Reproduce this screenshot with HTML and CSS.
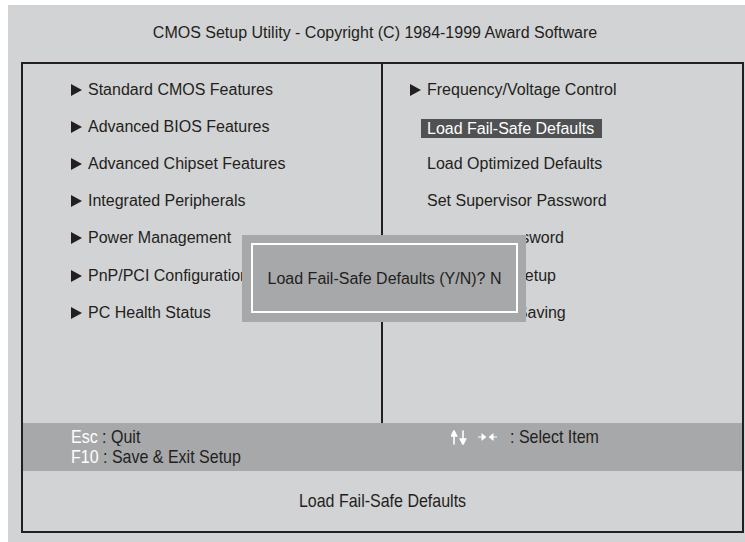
FILE: index.html
```html
<!DOCTYPE html>
<html lang="en">
  <head>
    <meta charset="UTF-8" />
    <title>CMOS Setup Utility</title>
    <link rel="stylesheet" href="styles.css">
  </head>
  <body>
    <div class="screen">
      <div class="title">CMOS Setup Utility - Copyright (C) 1984-1999 Award Software</div>

      <div class="setup">
        <div class="menus">
          <ul class="menu menu-left">
            <li><span class="arrow"></span>Standard CMOS Features</li>
            <li><span class="arrow"></span>Advanced BIOS Features</li>
            <li><span class="arrow"></span>Advanced Chipset Features</li>
            <li><span class="arrow"></span>Integrated Peripherals</li>
            <li><span class="arrow"></span>Power Management</li>
            <li><span class="arrow"></span>PnP/PCI Configurations</li>
            <li><span class="arrow"></span>PC Health Status</li>
          </ul>
          <ul class="menu menu-right">
            <li><span class="arrow"></span>Frequency/Voltage Control</li>
            <li class="plain"><span class="selected">Load Fail-Safe Defaults</span></li>
            <li class="plain">Load Optimized Defaults</li>
            <li class="plain">Set Supervisor Password</li>
            <li class="plain">Set User Password</li>
            <li class="plain">Save &amp; Exit Setup</li>
            <li class="plain">Exit Without Saving</li>
          </ul>

          <!-- confirm box drawn over the menu -->
          <div class="dialog">
            <div class="dialog-inner">Load Fail-Safe Defaults (Y/N)? N</div>
          </div>
        </div>

        <div class="keys">
          <div class="keys-col keys-left">
            <div class="key-line"><span class="key">Esc</span> : Quit</div>
            <div class="key-line"><span class="key">F10</span> : Save &amp; Exit Setup</div>
          </div>
          <div class="keys-col">
            <div class="key-line">
              <svg class="icon-updown" width="18" height="13" viewBox="0 0 18 13">
                <path d="M3 13V2M0.5 5L3 0.5 5.5 5Z" stroke="#fff" stroke-width="1.6" fill="#fff" />
                <path d="M12 0V11M9.5 8L12 12.5 14.5 8Z" stroke="#fff" stroke-width="1.6" fill="#fff" />
              </svg>
              <svg class="icon-leftright" width="20" height="8" viewBox="0 0 20 8">
                <path d="M0 4H6M4 1.5L7.5 4 4 6.5Z" stroke="#fff" stroke-width="1" fill="#fff" />
                <path d="M19 4H13M15 1.5L11.5 4 15 6.5Z" stroke="#fff" stroke-width="1" fill="#fff" />
              </svg>
              <span class="key-text">: Select Item</span>
            </div>
          </div>
        </div>

        <div class="status">Load Fail-Safe Defaults</div>
      </div>
    </div>
  </body>
</html>
```

FILE: styles.css
```css
body {
  margin: 0;
  background: #ffffff;
  font-family: "Liberation Sans", Arial, sans-serif;
  font-size: 16px;
  color: #231f20;
}

.screen {
  margin: 5px 0 0 8px;
  width: 737px;
  height: 537px;
  padding-top: 18px;
  box-sizing: border-box;
  background: #d2d3d5;
}

.title {
  text-align: center;
  line-height: 20px;
  padding-right: 3px;
}

.setup {
  margin: 19px 0 0 13px;
  width: 719px;
  border: 2px solid #231f20;
}

.menus {
  position: relative;
  display: flex;
  height: 359px;
}

.menu {
  list-style: none;
  margin: 0;
  padding: 7px 0 0 0;
  box-sizing: border-box;
}

.menu li {
  display: flex;
  align-items: center;
  height: 37.2px;
  white-space: nowrap;
}

.menu-left {
  width: 360px;
  padding-left: 48px;
  border-right: 2px solid #231f20;
}

.menu-right {
  width: 359px;
  padding-left: 27px;
}

.menu-right .plain {
  padding-left: 17px;
}

.arrow {
  width: 0;
  height: 0;
  border-left: 11px solid #231f20;
  border-top: 6px solid transparent;
  border-bottom: 6px solid transparent;
  margin-right: 6px;
}

.selected {
  background: #505153;
  color: #ffffff;
  line-height: 19px;
  padding: 0 8px 0 6px;
  margin: 3px 0 0 -6px;
}

.dialog {
  position: absolute;
  left: 219px;
  top: 171px;
  width: 284px;
  height: 87px;
  padding: 8px 8px 9px 9px;
  box-sizing: border-box;
  background: #a7a8aa;
}

/* the box blanks whole text rows on the right side */
.dialog::before {
  content: "";
  position: absolute;
  left: 165px;
  right: 0;
  top: -6px;
  height: 6px;
  background: #d2d3d5;
}

.dialog-inner {
  height: 100%;
  border: 2px solid #ffffff;
  box-sizing: border-box;
  display: flex;
  align-items: center;
  justify-content: center;
  padding-top: 2px;
}

.keys {
  display: flex;
  height: 48px;
  padding: 4px 0 0 48px;
  box-sizing: border-box;
  background: #a7a8aa;
}

.keys-left {
  width: 380px;
}

.key-line {
  display: flex;
  align-items: center;
  height: 20px;
  transform: scaleY(1.12);
  white-space: pre;
}

.key {
  color: #ffffff;
}

.icon-updown {
  margin-right: 9px;
}

.icon-leftright {
  margin-right: 12px;
}

.status {
  height: 60px;
  display: flex;
  align-items: center;
  justify-content: center;
  transform: scaleY(1.12);
}
```
